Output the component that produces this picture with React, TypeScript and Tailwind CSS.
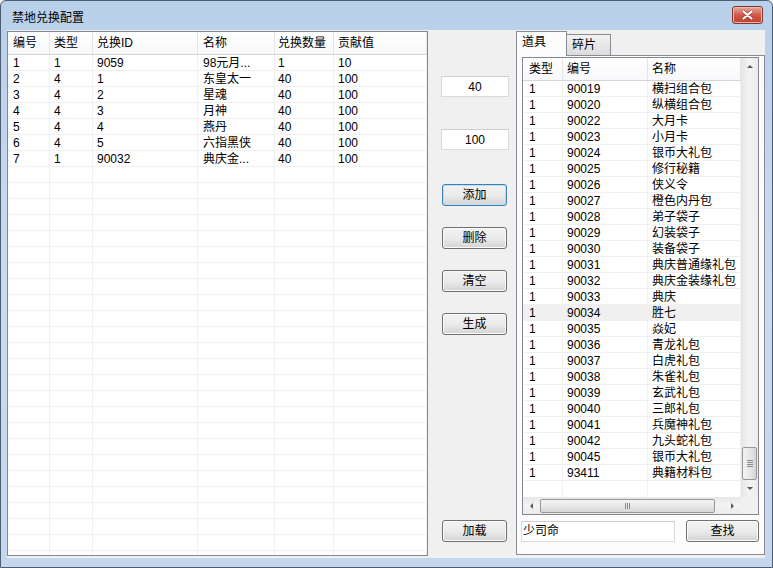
import React from 'react';

const F = "font-['Liberation_Sans','Noto_Sans_CJK_SC',sans-serif]";

const leftCols = [
  { t: '编号', w: 42, p: 5 },
  { t: '类型', w: 43, p: 4 },
  { t: '兑换ID', w: 105, p: 4 },
  { t: '名称', w: 77, p: 5 },
  { t: '兑换数量', w: 59, p: 3 },
  { t: '贡献值', w: 93, p: 4 },
];

const leftRows = [
  ['1', '1', '9059', '98元月...', '1', '10'],
  ['2', '4', '1', '东皇太一', '40', '100'],
  ['3', '4', '2', '星魂', '40', '100'],
  ['4', '4', '3', '月神', '40', '100'],
  ['5', '4', '4', '燕丹', '40', '100'],
  ['6', '4', '5', '六指黑侠', '40', '100'],
  ['7', '1', '90032', '典庆金...', '40', '100'],
];

const rightCols = [
  { t: '类型', w: 40, p: 6 },
  { t: '编号', w: 85, p: 4 },
  { t: '名称', w: 93, p: 4 },
];

const items: [string, string][] = [
  ['90019', '横扫组合包'],
  ['90020', '纵横组合包'],
  ['90022', '大月卡'],
  ['90023', '小月卡'],
  ['90024', '银币大礼包'],
  ['90025', '修行秘籍'],
  ['90026', '侠义令'],
  ['90027', '橙色内丹包'],
  ['90028', '弟子袋子'],
  ['90029', '幻装袋子'],
  ['90030', '装备袋子'],
  ['90031', '典庆普通缘礼包'],
  ['90032', '典庆金装缘礼包'],
  ['90033', '典庆'],
  ['90034', '胜七'],
  ['90035', '焱妃'],
  ['90036', '青龙礼包'],
  ['90037', '白虎礼包'],
  ['90038', '朱雀礼包'],
  ['90039', '玄武礼包'],
  ['90040', '三郎礼包'],
  ['90041', '兵魔神礼包'],
  ['90042', '九头蛇礼包'],
  ['90045', '银币大礼包'],
  ['93411', '典籍材料包'],
];

function Header({ cols }: { cols: { t: string; w: number; p: number }[] }) {
  return (
    <div className="flex h-[23px] shrink-0 border-b border-[#d5d5d5] bg-gradient-to-b from-white to-[#f7f8fa]">
      {cols.map((c) => (
        <div
          key={c.t}
          className="flex items-center shrink-0 border-r border-[#e5e5e5] whitespace-nowrap"
          style={{ width: c.w, paddingLeft: c.p }}
        >
          {c.t}
        </div>
      ))}
    </div>
  );
}

function Row({ cols, cells, hot }: { cols: { w: number; p: number }[]; cells: string[]; hot?: boolean }) {
  return (
    <div className={`flex h-[16px] shrink-0 ${hot ? 'bg-[#f0f0f0]' : ''}`}>
      {cols.map((c, i) => (
        <div
          key={i}
          className="flex items-center shrink-0 overflow-hidden whitespace-nowrap border-r border-b border-[#f0f0f0] leading-none"
          style={{ width: c.w, paddingLeft: c.p }}
        >
          {cells[i]}
        </div>
      ))}
    </div>
  );
}

function Btn({ label, def, className }: { label: string; def?: boolean; className?: string }) {
  return (
    <div
      className={`flex h-[22px] items-center justify-center rounded-[3px] border bg-gradient-to-b from-[#f2f2f2] via-[#ebebeb] to-[#d4d4d4] ${
        def ? 'border-[#3c7fb1] shadow-[inset_0_0_0_1px_#b7e0f8]' : 'border-[#707070] shadow-[inset_0_0_0_1px_#fbfbfb]'
      } ${className ?? ''}`}
    >
      {label}
    </div>
  );
}

function Edit({ value, className }: { value: string; className?: string }) {
  return (
    <div className={`flex h-[21px] items-center border border-[#dadada] border-t-[#cfcfcf] bg-white ${className ?? ''}`}>
      {value}
    </div>
  );
}

function LeftList() {
  const blanks = Array.from({ length: 26 }, () => ['', '', '', '', '', '']);
  return (
    <div className="mt-[1px] flex h-[525px] w-[421px] shrink-0 flex-col overflow-hidden border border-[#828790] bg-white">
      <Header cols={leftCols} />
      {leftRows.concat(blanks).map((r, i) => (
        <Row key={i} cols={leftCols} cells={r} />
      ))}
    </div>
  );
}

function VScroll() {
  return (
    <div className="flex w-[17px] shrink-0 flex-col bg-gradient-to-r from-[#e6e6e6] via-[#f3f3f3] to-[#ebebeb]">
      <div className="flex h-[17px] items-center justify-center">
        <div className="h-0 w-0 border-x-[3px] border-b-[3px] border-x-transparent border-b-[#5a5a5a]" />
      </div>
      <div className="flex-1" />
      <div className="mx-[1px] flex h-[33px] items-center justify-center rounded-[2px] border border-[#979797] bg-gradient-to-r from-[#f3f3f3] via-[#e8e8e8] to-[#d6d6d6]">
        <div className="flex flex-col gap-[1px]">
          <div className="h-[1px] w-[6px] bg-[#8a8a8a]" />
          <div className="h-[1px] w-[6px] bg-[#8a8a8a]" />
          <div className="h-[1px] w-[6px] bg-[#8a8a8a]" />
          <div className="h-[1px] w-[6px] bg-[#8a8a8a]" />
        </div>
      </div>
      <div className="flex h-[17px] items-center justify-center">
        <div className="h-0 w-0 border-x-[3px] border-t-[3px] border-x-transparent border-t-[#5a5a5a]" />
      </div>
    </div>
  );
}

function HScroll() {
  return (
    <div className="flex h-[17px] shrink-0">
      <div className="flex flex-1 items-center bg-gradient-to-b from-[#e6e6e6] via-[#f3f3f3] to-[#ebebeb]">
        <div className="flex w-[17px] items-center justify-center">
          <div className="h-0 w-0 border-y-[3px] border-r-[3px] border-y-transparent border-r-[#5a5a5a]" />
        </div>
        <div className="flex h-[14px] w-[175px] items-center justify-center rounded-[2px] border border-[#979797] bg-gradient-to-b from-[#f3f3f3] via-[#e8e8e8] to-[#d6d6d6]">
          <div className="flex gap-[1px]">
            <div className="h-[6px] w-[1px] bg-[#8a8a8a]" />
            <div className="h-[6px] w-[1px] bg-[#8a8a8a]" />
            <div className="h-[6px] w-[1px] bg-[#8a8a8a]" />
          </div>
        </div>
        <div className="flex-1" />
        <div className="flex w-[17px] items-center justify-center">
          <div className="h-0 w-0 border-y-[3px] border-l-[3px] border-y-transparent border-l-[#5a5a5a]" />
        </div>
      </div>
      <div className="w-[17px] bg-[#f0f0f0]" />
    </div>
  );
}

function RightList() {
  return (
    <div className="ml-[5px] mt-[1px] flex h-[458px] w-[237px] flex-col border border-[#828790] bg-white">
      <div className="flex h-[439px]">
        <div className="flex w-[218px] flex-col overflow-hidden">
          <Header cols={rightCols} />
          {items.map((it, i) => (
            <Row key={it[0] + i} cols={rightCols} cells={['1', it[0], it[1]]} hot={i === 14} />
          ))}
          <div className="flex flex-1">
            {rightCols.map((c, i) => (
              <div key={i} className="shrink-0 border-r border-[#f0f0f0]" style={{ width: c.w }} />
            ))}
          </div>
        </div>
        <VScroll />
      </div>
      <HScroll />
    </div>
  );
}

function CloseButton() {
  return (
    <div className="mr-[9px] mt-[-2px] flex h-[18px] w-[31px] items-center justify-center rounded-[3px] border border-[#7a3a33] bg-gradient-to-b from-[#e8a89c] via-[#d0584a] to-[#c2402f] shadow-[inset_0_0_0_1px_#efb5ab]">
      <svg width="11" height="10" viewBox="0 0 11 10">
        <path d="M1.5 1.5 L9.5 8.5 M9.5 1.5 L1.5 8.5" stroke="#4a1a14" strokeWidth="3.4" strokeLinecap="round" opacity="0.5" />
        <path d="M1.5 1.5 L9.5 8.5 M9.5 1.5 L1.5 8.5" stroke="#ffffff" strokeWidth="2.2" strokeLinecap="round" />
      </svg>
    </div>
  );
}

export default function App() {
  return (
    <div className={`h-[568px] w-[773px] overflow-hidden bg-[#f0f0f0] ${F} text-[12px] text-black`}>
      <div className="flex h-[568px] w-[773px] flex-col overflow-hidden rounded-t-[6px] border border-[#4d5e73] bg-gradient-to-b from-[#b9d0ea] via-[#c9dbf0] to-[#c4d7ee]">
        {/* title bar */}
        <div className="flex h-[29px] shrink-0 items-center justify-between">
          <span className="pl-[11px] pt-[4px] text-[12px] text-black">禁地兑换配置</span>
          <CloseButton />
        </div>

        {/* client */}
        <div className="ml-[6px] flex h-[528px] w-[758px] shrink-0 bg-[#f0f0f0]">
          <LeftList />

          {/* middle column */}
          <div className="flex w-[88px] shrink-0 flex-col">
            <Edit value="40" className="ml-[13px] mt-[46px] w-[68px] justify-center" />
            <Edit value="100" className="ml-[13px] mt-[32px] w-[68px] justify-center" />
            <Btn label="添加" def className="ml-[14px] mt-[34px] w-[65px]" />
            <Btn label="删除" className="ml-[14px] mt-[21px] w-[65px]" />
            <Btn label="清空" className="ml-[14px] mt-[21px] w-[65px]" />
            <Btn label="生成" className="ml-[14px] mt-[21px] w-[65px]" />
            <Btn label="加载" className="ml-[14px] mt-[185px] w-[65px]" />
          </div>

          {/* tab control */}
          <div className="flex w-[249px] shrink-0 flex-col">
            <div className="flex h-[25px] items-end">
              <div className="relative z-10 mb-[-1px] flex h-[25px] w-[51px] items-start border border-b-0 border-[#898c95] bg-[#fcfcfc] pl-[5px] pt-[1px]">
                道具
              </div>
              <div className="ml-[-1px] flex h-[21px] w-[45px] items-start border border-b-0 border-[#898c95] bg-gradient-to-b from-[#f2f2f2] to-[#dcdcdc] pl-[5px] pt-[1px]">
                碎片
              </div>
            </div>
            <div className="flex h-[500px] flex-col border border-[#898c95] bg-[#fcfcfc]">
              <RightList />
              <div className="mt-[5px] flex items-center">
                <Edit value="少司命" className="ml-[4px] w-[154px] pl-[1px]" />
                <Btn label="查找" className="ml-[11px] w-[73px]" />
              </div>
            </div>
          </div>
        </div>
      </div>
    </div>
  );
}
